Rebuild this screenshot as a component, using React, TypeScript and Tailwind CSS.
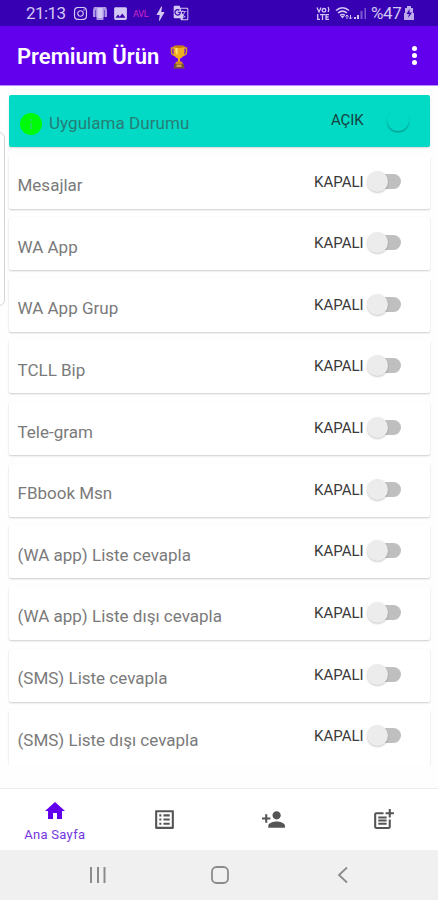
import { MdHome, MdListAlt, MdPersonAdd, MdPostAdd, MdBolt, MdGTranslate, MdImage } from 'react-icons/md';
import { FaInstagram } from 'react-icons/fa';

const rows = [
  'Mesajlar',
  'WA App',
  'WA App Grup',
  'TCLL Bip',
  'Tele-gram',
  'FBbook Msn',
  '(WA app) Liste cevapla',
  '(WA app) Liste dışı cevapla',
  '(SMS) Liste cevapla',
  '(SMS) Liste dışı cevapla',
];

function StatusBar() {
  return (
    <div className="h-[26px] bg-[#3700b3] flex items-center text-[#d3c8f3] pl-[26px] pr-[24px]">
      <span className="text-[17px] leading-none w-[47px] tracking-[-0.6px]">21:13</span>
      <FaInstagram className="w-[15px] h-[15px]" />
      <svg className="ml-[5px]" width="14" height="15" viewBox="0 0 14 15" fill="currentColor">
        <path d="M1 1h12l1 3v7h-2V4l-.5 0V11h-1v3H3.500v-3h-1V4H2v7H0V4z" opacity=".75" />
        <path d="M4.500 2h5v10h-5z" />
      </svg>
      <MdImage className="ml-[5px] w-[17px] h-[17px]" />
      <span className="ml-[4px] w-[17px] text-[9px] leading-none tracking-[-0.2px] text-[#d42bc5] pt-[2px]">AVL</span>
      <MdBolt className="ml-px w-[19px] h-[19px]" />
      <MdGTranslate className="ml-[3px] w-[16px] h-[16px]" />

      <div className="ml-auto flex items-center">
        {/* VoLTE */}
        <svg className="mr-[5px]" width="14" height="15" viewBox="0 0 14 15" fill="none" stroke="currentColor" strokeWidth="1.3">
          <path d="M1 1.500 3 6l2-4.500M12 1q1.500 2.500 0 5" />
          <circle cx="8" cy="4.300" r="1.800" />
          <path d="M1.700 8v5.300H4M4 8.600h5M6.500 8.600V14M13 8.600h-3v4.700h3M10 11h2.500" />
        </svg>
        <svg width="18" height="15" viewBox="0 0 18 15" fill="none" stroke="currentColor" strokeWidth="1.6">
          <path d="M1 4.500C5 1 10 1 14 4.500M3 7c3-2.500 6-2.500 9 0M5 9.400c2-1.400 3-1.400 5 0" />
          <path d="M7.500 12.500 5.500 10h4z" fill="currentColor" stroke="none" />
          <path d="M12 13V9m-1.500 1.500L12 9l1.500 1.500M15.500 9v4m-1.500-1.500 1.500 1.500 1.500-1.500" strokeWidth="1" />
        </svg>
        <svg className="ml-px" width="13" height="15" viewBox="0 0 13 15" fill="currentColor">
          <path d="M0 11h2v2H0zM3 9h2v4H3z" />
          <path d="M6.500 5h2v8h-2zM10.500 2h1.500v11h-1.500z" opacity=".45" />
        </svg>
        <span className="ml-[4px] text-[17px] leading-none tracking-[-0.4px] w-[32px]">%47</span>
        <svg className="ml-px" width="10" height="14" viewBox="0 0 10 14" fill="currentColor">
          <path d="M3 0h4v2h2v5h1v7H0V7h1V2h2z" opacity=".85" />
          <path d="M5.500 3 2.500 8H5l-1 4 4-5.500H5.500z" fill="#3700b3" />
        </svg>
      </div>
    </div>
  );
}

function Trophy() {
  return (
    <svg width="18" height="26" viewBox="0 0 18 26">
      <path d="M4 4H1.500v3.500c0 2.500 2 4 4.500 4M14 4h2.500v3.500c0 2.500-2 4-4.500 4" fill="none" stroke="#d99a20" strokeWidth="1.500" />
      <path d="M3.500 2h11v6c0 4-2.500 6-4.500 6.500V19H8v-4.500C6 14 3.500 12 3.500 8z" fill="#efad22" />
      <path d="M5.500 4h2v7c-1.500-1-2-3-2-5z" fill="#ffe373" />
      <ellipse cx="9" cy="2.600" rx="5.500" ry="1.300" fill="#c47d14" />
      <path d="M6 17.500h6l1 3H5z" fill="#d28b1c" />
      <path d="M4 20h10v2.500l1 2H3l1-2z" fill="#76523b" />
      <path d="M6.500 20.500h5V23h-5z" fill="#d5a14c" />
    </svg>
  );
}

function Header() {
  return (
    <header className="h-[60px] shrink-0 bg-[#6200ee] border-b border-[#b68af7] flex items-center pl-[17px] pr-[21px] text-white">
      <h1 className="text-[22px] font-semibold leading-none w-[153px] whitespace-nowrap pt-[2px]">Premium Ürün</h1>
      <div className="pt-[3px]">
        <Trophy />
      </div>
      <div className="ml-auto flex flex-col gap-[2px] pb-px">
        <i className="w-[5px] h-[5px] rounded-full bg-white"></i>
        <i className="w-[5px] h-[5px] rounded-full bg-white"></i>
        <i className="w-[5px] h-[5px] rounded-full bg-white"></i>
      </div>
    </header>
  );
}

function Toggle() {
  return (
    <div className="w-[35px] h-[22px] mb-[2px] flex items-center">
      <div className="w-[21px] h-[21px] shrink-0 rounded-full bg-[#ececec] shadow-[0_1px_2px_rgba(0,0,0,0.22)] z-10"></div>
      <div className="w-[21px] h-[15px] shrink-0 -ml-[8px] rounded-r-full bg-[#bfbfbf]"></div>
    </div>
  );
}

export default function App() {
  return (
    <div className="w-[438px] h-[900px] bg-[#fefefe] flex flex-col overflow-hidden relative font-[Roboto,sans-serif]">
      <StatusBar />
      <Header />

      <main className="h-[679px] shrink-0 overflow-hidden pl-[9px] pr-[8px] pt-[8.500px]">
        {/* Uygulama durumu */}
        <div className="h-[52.500px] mb-[8.500px] rounded-[2px] bg-[#03dac5] shadow-[0_1px_2px_rgba(0,0,0,0.16)] flex items-center pl-[11px]">
          <div className="w-[22px] h-[22px] mt-[7px] rounded-full bg-[#00fb08] flex flex-col items-center justify-center gap-[2px]">
            <i className="w-[2px] h-[2px] bg-[#25dc55]"></i>
            <i className="w-[2px] h-[6px] bg-[#25dc55]"></i>
          </div>
          <span className="ml-[7px] mt-[5px] text-[17px] leading-none tracking-[0.05px] text-[#277d76]">Uygulama Durumu</span>
          <span className="ml-auto w-[56px] text-[15px] leading-none tracking-[-0.1px] text-[#16423e]">AÇIK</span>
          <div className="w-[22px] h-[22px] mr-[21px] mb-[2px] rounded-full bg-[#03dac5] shadow-[0_1.500px_1.500px_rgba(0,0,0,0.28)]"></div>
        </div>

        {/* son kart alttan kesiliyor */}
        {rows.map((label) => (
          <div
            key={label}
            className="h-[53px] mb-[8.650px] last:h-[61px] last:pb-[8px] rounded-[2px] bg-white shadow-[0_1px_2px_rgba(0,0,0,0.2)] flex items-center pl-[8.500px] pr-[28px]"
          >
            <span className="mt-[7px] text-[17px] leading-none whitespace-nowrap text-[#7a7a7a]">{label}</span>
            <span className="ml-auto w-[53px] text-[15px] leading-none text-[#3a3a3a]">KAPALI</span>
            <Toggle />
          </div>
        ))}
      </main>

      <div className="h-[23px] shrink-0"></div>

      {/* Alt menü */}
      <nav className="h-[62px] shrink-0 border-t border-[#ededed] bg-white grid grid-cols-4 text-[#555]">
        <div className="flex flex-col items-center pt-[10px] text-[#6200ee]">
          <MdHome className="w-[24px] h-[24px]" />
          <span className="mt-[5px] text-[13px] leading-none tracking-[0.3px] text-[#7336df]">Ana Sayfa</span>
        </div>
        <div className="flex items-center justify-center">
          <MdListAlt className="w-[25px] h-[25px]" />
        </div>
        <div className="flex items-center justify-center">
          <MdPersonAdd className="w-[25px] h-[25px]" />
        </div>
        <div className="flex items-center justify-center">
          <MdPostAdd className="w-[25px] h-[25px]" />
        </div>
      </nav>

      {/* Sistem tuşları */}
      <div className="h-[50px] shrink-0 bg-[#f0f0f0] flex items-center pl-[88px] text-[#8b8b8b]">
        <svg width="18" height="18" viewBox="0 0 18 18" stroke="currentColor" strokeWidth="2">
          <path d="M3 1v16M10 1v16M16.500 1v16" />
        </svg>
        <svg className="ml-[105px]" width="18" height="18" viewBox="0 0 18 18" fill="none" stroke="currentColor" strokeWidth="1.800">
          <rect x="1" y="1" width="16" height="16" rx="4.500" />
        </svg>
        <svg className="ml-[108px]" width="12" height="18" viewBox="0 0 12 18" fill="none" stroke="currentColor" strokeWidth="1.800">
          <path d="M10 1.500 2 9l8 7.500" />
        </svg>
      </div>

      {/* Kenar paneli */}
      <div className="absolute -left-[10px] top-[132px] w-[15px] h-[174px] rounded-[6px] border border-[#d4d4d8] bg-white/60"></div>
    </div>
  );
}
